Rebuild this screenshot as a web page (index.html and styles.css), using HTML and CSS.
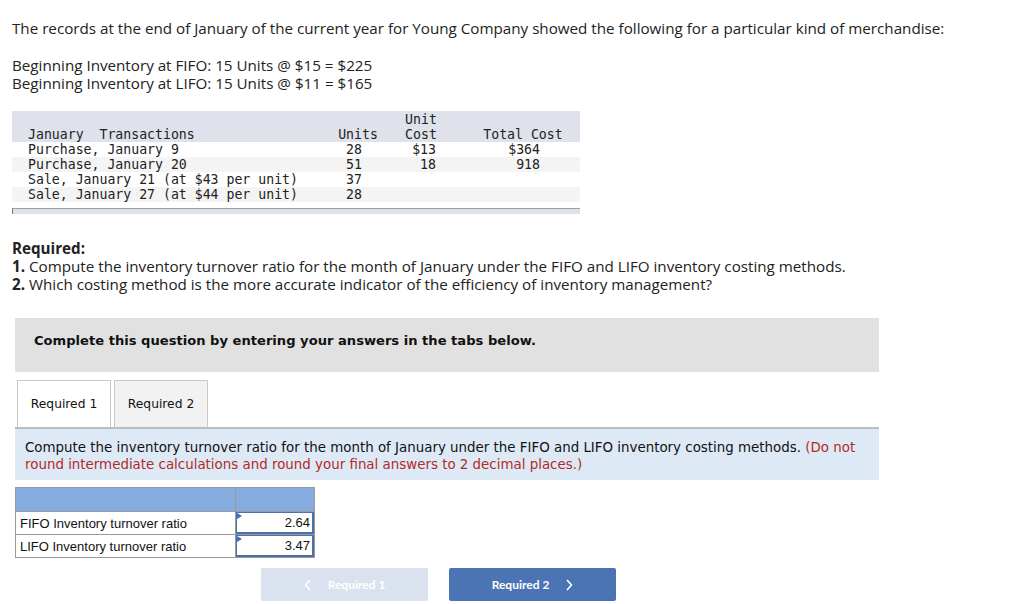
FILE: index.html
```html
<!DOCTYPE html>
<html>
<head>
<meta charset="utf-8">
<link rel="stylesheet" href="styles.css">
</head>
<body>
<div class="page">
  <p class="intro">The records at the end of January of the current year for Young Company showed the following for a particular kind of merchandise:</p>
  <p class="begin">Beginning Inventory at FIFO: 15 Units @ $15 = $225<br>Beginning Inventory at LIFO: 15 Units @ $11 = $165</p>

  <div class="tx-wrap">
    <table class="tx">
      <colgroup><col class="c1"><col class="c2"><col class="c3"><col class="c4"></colgroup>
      <thead>
        <tr><th class="name">January&nbsp; Transactions</th><th>Units</th><th>Unit<br>Cost</th><th class="tc">Total Cost</th></tr>
      </thead>
      <tbody>
        <tr><td class="name">Purchase, January 9</td><td class="u">28</td><td class="uc">$13</td><td class="t">$364</td></tr>
        <tr class="alt"><td class="name">Purchase, January 20</td><td class="u">51</td><td class="uc">18</td><td class="t">918</td></tr>
        <tr><td class="name">Sale, January 21 (at $43 per unit)</td><td class="u">37</td><td class="uc"></td><td class="t"></td></tr>
        <tr class="alt"><td class="name">Sale, January 27 (at $44 per unit)</td><td class="u">28</td><td class="uc"></td><td class="t"></td></tr>
      </tbody>
    </table>
    <div class="tx-bar"></div>
  </div>

  <div class="required">
    <p class="req-title">Required:</p>
    <p><b>1.</b> Compute the inventory turnover ratio for the month of January under the FIFO and LIFO inventory costing methods.</p>
    <p><b>2.</b> Which costing method is the more accurate indicator of the efficiency of inventory management?</p>
  </div>

  <div class="banner">Complete this question by entering your answers in the tabs below.</div>

  <div class="tabs">
    <div class="tab active">Required 1</div>
    <div class="tab">Required 2</div>
  </div>
  <div class="instr">Compute the inventory turnover ratio for the month of January under the FIFO and LIFO inventory costing methods. <span class="red">(Do not round intermediate calculations and round your final answers to 2 decimal places.)</span></div>

  <table class="ans">
    <tr class="hd"><td class="lab"></td><td class="val"></td></tr>
    <tr><td class="lab">FIFO Inventory turnover ratio</td><td class="val"><div class="inp">2.64</div></td></tr>
    <tr><td class="lab">LIFO Inventory turnover ratio</td><td class="val"><div class="inp">3.47</div></td></tr>
  </table>

  <div class="nav">
    <div class="btn prev"><svg class="chev l" width="8" height="12" viewBox="0 0 8 12"><polyline points="6,1 1.5,6 6,11" fill="none" stroke="#fff" stroke-width="1.6"/></svg>Required 1</div>
    <div class="btn next">Required 2<svg class="chev r" width="8" height="12" viewBox="0 0 8 12"><polyline points="2,1 6.5,6 2,11" fill="none" stroke="#fff" stroke-width="1.6"/></svg></div>
  </div>
</div>
</body>
</html>
```

FILE: styles.css
```css
* { box-sizing: border-box; }
html, body { margin: 0; padding: 0; background: #fff; }
body { font-family: "Open Sans", Lato, sans-serif; color: #222; }
.page { padding: 19px 0 0 12px; width: 1024px; }
p { margin: 0; }
.intro { font-size: 15.2px; line-height: 18px; }
.begin { font-size: 15.2px; line-height: 18px; margin-top: 19px; }

.tx-wrap { margin-top: 19px; width: 568px; }
.tx { border-collapse: collapse; table-layout: fixed; width: 568px;
  font-family: "DejaVu Sans Mono", monospace; font-size: 13.2px; line-height: 15px; color: #222; }
.tx col.c1 { width: 318px; }
.tx col.c2 { width: 56px; }
.tx col.c3 { width: 70px; }
.tx col.c4 { width: 124px; }
.tx th { font-weight: normal; background: #dfe2ea; padding: 0; vertical-align: bottom; text-align: center; }
.tx thead tr th { padding-top: 1px; padding-bottom: 0; }
.tx th.name, .tx td.name { text-align: left; padding-left: 16px; }
.tx th.tc { padding-left: 10px; }
.tx td { padding: 0; height: 15px; white-space: pre; }
.tx tr.alt td { background: #f4f4f4; }
.tx td.u { text-align: right; padding-right: 24px; }
.tx td.uc { text-align: right; padding-right: 20px; }
.tx td.t { text-align: right; padding-right: 40px; }
.tx-bar { margin-top: 6px; height: 6px; background: #dfe2ea; border-top: 1px solid #9aa0a8; border-left: 1px solid #777; }

.required { margin-top: 25px; font-size: 15.2px; line-height: 18px; }
.required .req-title { font-weight: bold; }

.banner { margin: 25px 0 0 3px; width: 864px; height: 54px; background: #e1e1e1;
  font-family: "DejaVu Sans", Verdana, sans-serif; font-weight: bold; font-size: 13.1px;
  padding: 15px 0 0 19px; color: #111; line-height: 16px; }

.tabs { display: flex; gap: 3px; margin: 8px 0 0 5px; height: 47px; }
.tab { width: 94px; border: 1px solid #c8c8c8; border-bottom: none; background: #f2f2f2;
  font-family: "DejaVu Sans", Verdana, sans-serif; font-size: 12.3px; color: #111;
  display: flex; align-items: center; justify-content: center; }
.tab.active { background: #fff; }

.instr { margin-left: 3px; width: 864px; height: 53px; background: #dee9f6; border-top: 2px solid #b9bcc0;
  font-family: "DejaVu Sans", Verdana, sans-serif; font-size: 13.4px; line-height: 17px; color: #111;
  padding: 10px 10px 0 10px; }
.red { color: #b22a27; }

.ans { margin: 7px 0 0 3px; border-collapse: collapse; font-family: "Liberation Sans", Arial, sans-serif; font-size: 13px; color: #111; }
.ans td { border: 1px solid #9a9a9a; padding: 0; }
.ans .lab { width: 220px; padding-left: 4px; height: 23px; }
.ans .val { width: 79px; }
.ans tr.hd td { background: #86abdf; height: 24px; }
.inp { position: relative; height: 22px; border: 1px solid #4b70aa; border-width: 1px 2px 2px 1px; text-align: right; padding-right: 2px; line-height: 20px; background: #fff; }
.inp::before { content: ""; position: absolute; left: 0; top: 0; border-left: 5px solid #3a6fc4; border-top: 3px solid transparent; border-bottom: 3px solid transparent; }

.nav { display: flex; gap: 21px; margin: 10px 0 0 249px; }
.btn { width: 167px; height: 33px; border-radius: 2px; color: #fff; font-family: Lato, sans-serif; font-weight: bold; font-size: 12px;
  display: flex; align-items: center; justify-content: center; }
.btn.prev { background: #d9e2ee; }
.btn.next { background: #4a74b4; }
.chev.l { margin-right: 16px; }
.chev.r { margin-left: 16px; }
```
